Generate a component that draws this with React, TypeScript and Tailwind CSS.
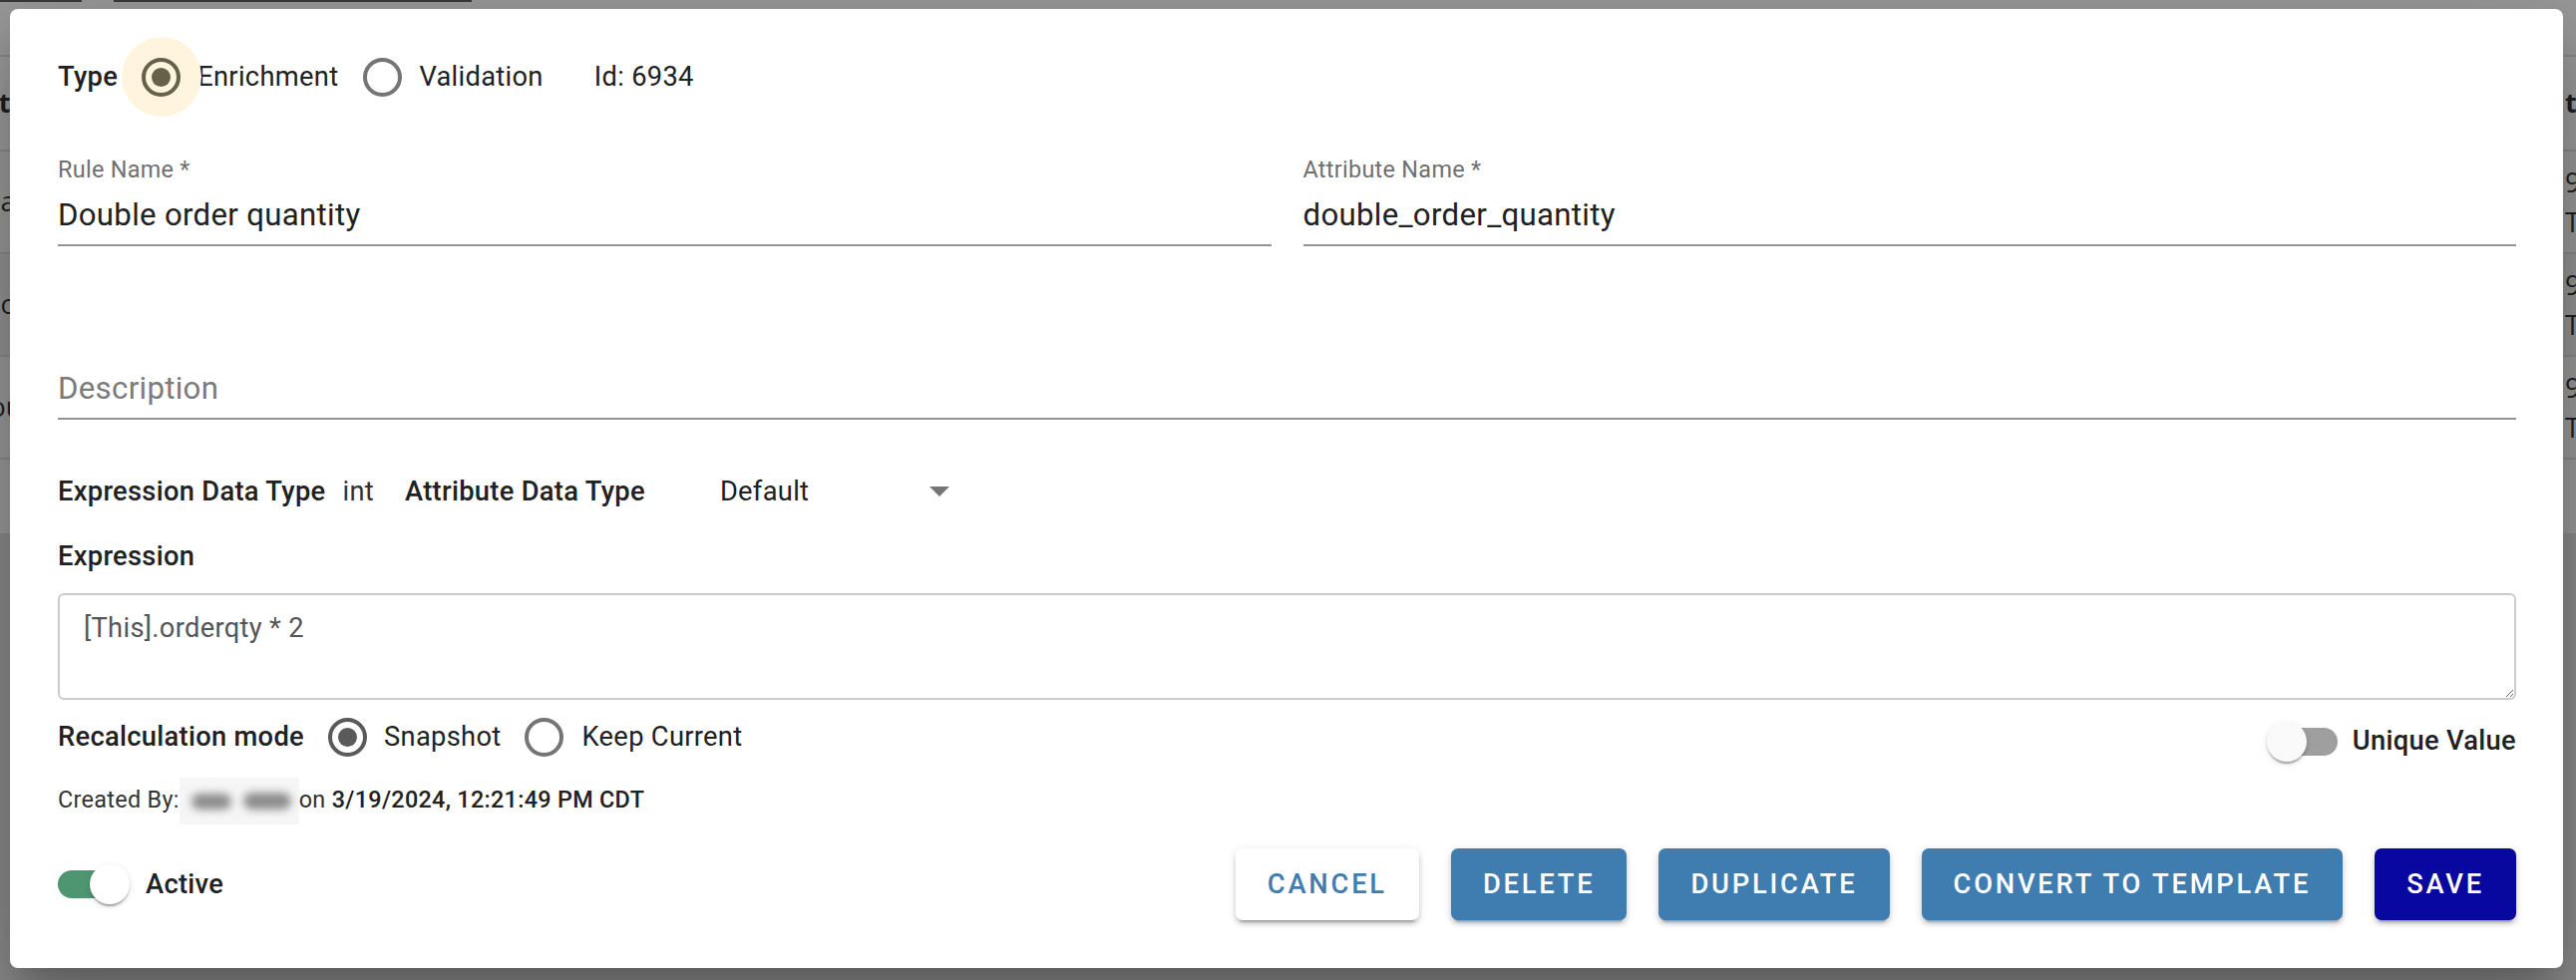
import React from "react";

function Radio({
  checked = false,
  focus = false,
  ring = "border-[#757575]",
  dot = "bg-[#757575]",
}: {
  checked?: boolean;
  focus?: boolean;
  ring?: string;
  dot?: string;
}) {
  return (
    <span className="relative flex h-[39px] w-[39px] shrink-0 items-center justify-center">
      {focus && (
        <span className="absolute left-1/2 top-1/2 h-[80px] w-[80px] -translate-x-1/2 -translate-y-1/2 rounded-full bg-[#fff5df]" />
      )}
      <span
        className={
          "relative flex h-[39px] w-[39px] items-center justify-center rounded-full border-[4px] " +
          ring
        }
      >
        {checked && <span className={"h-[19px] w-[19px] rounded-full " + dot} />}
      </span>
    </span>
  );
}

const thumbShadow =
  "shadow-[0_4px_2px_-2px_rgba(0,0,0,0.2),0_2px_2px_0_rgba(0,0,0,0.14),0_2px_6px_0_rgba(0,0,0,0.12)]";

function SwitchOn() {
  return (
    <span className="relative block h-[40px] w-[72px] shrink-0">
      <span className="absolute left-0 top-[6px] h-[28px] w-[66px] rounded-full bg-[#4e9571]" />
      <span className={"absolute left-[32px] top-0 h-[40px] w-[40px] rounded-full bg-white " + thumbShadow} />
    </span>
  );
}

function SwitchOff() {
  return (
    <span className="relative block h-[40px] w-[71px] shrink-0">
      <span className="absolute left-[5px] top-[6px] h-[28px] w-[66px] rounded-full bg-[#9f9f9f]" />
      <span className={"absolute left-0 top-0 h-[40px] w-[40px] rounded-full bg-[#fafafa] " + thumbShadow} />
    </span>
  );
}

const btnBase =
  "h-[72px] rounded-[7px] px-[32px] text-[27.3px] font-medium uppercase tracking-[2.8px] shadow-[0_6px_2px_-4px_rgba(0,0,0,0.2),0_4px_4px_0_rgba(0,0,0,0.14),0_2px_10px_0_rgba(0,0,0,0.12)]";

function Background() {
  const rows = [
    { l: "Daily", ml: "-ml-[19px]" },
    { l: "Dollar", ml: "-ml-[19px]" },
    { l: "Double", ml: "-ml-[30px]" },
  ];
  return (
    <div className="absolute inset-0 flex flex-col font-['Open_Sans',sans-serif] text-[27px] text-[#1f1f1f]">
      <div className="flex h-[2px] shrink-0 bg-[#9a9a9a]">
        <div className="w-[82px] bg-[#3a3a3a]" />
        <div className="w-[32px]" />
        <div className="w-[359px] bg-[#3a3a3a]" />
      </div>
      <div className="h-[53px] shrink-0 bg-[#9a9a9a]" />
      <div className="flex h-[95px] shrink-0 items-center justify-between border-t-2 border-[#8a8a8a] bg-[#9c9c9c] font-bold">
        <span className="flex w-[10px] overflow-hidden whitespace-nowrap">
          <span className="-ml-[20px]">Att</span>
        </span>
        <span className="w-[11px] overflow-hidden whitespace-nowrap">t</span>
      </div>
      {rows.map((r, i) => (
        <div
          key={i}
          className={
            "flex h-[103px] shrink-0 items-center justify-between border-t-2 border-[#8a8a8a] " +
            (i === 1 ? "bg-[#949494]" : "bg-[#9a9a9a]")
          }
        >
          <span className="flex w-[10px] overflow-hidden whitespace-nowrap">
            <span className={r.ml}>{r.l}</span>
          </span>
          <span className="flex w-[11px] flex-col overflow-hidden whitespace-nowrap leading-[40px]">
            <span>9</span>
            <span>T</span>
          </span>
        </div>
      ))}
      <div className="h-[78px] shrink-0 border-b-2 border-t-2 border-[#8a8a8a] bg-[#9a9a9a]" />
      <div className="flex-1 bg-[#8c8c8c]" />
    </div>
  );
}

export default function App() {
  return (
    <div className="relative h-[983px] w-[2583px] overflow-hidden bg-[#8c8c8c] font-['Roboto',sans-serif]">
      <Background />
      <div className="absolute left-[10px] top-[9px] flex h-[962px] w-[2560px] flex-col rounded-[8px] bg-white pl-[48px] pr-[47px] pt-[27px] tracking-[0.3px] text-[#212121] shadow-[0_21px_29px_-14px_rgba(0,0,0,0.2),0_47px_74px_6px_rgba(0,0,0,0.14),0_18px_90px_16px_rgba(0,0,0,0.12)]">
        {/* Type row */}
        <div className="flex h-[82px] items-center text-[27.3px]">
          <span className="font-medium">Type</span>
          <span className="ml-[24px]">
            <Radio checked focus ring="border-[#67604a]" dot="bg-[#67604a]" />
          </span>
          <span className="ml-[17px]">Enrichment</span>
          <span className="ml-[25px]">
            <Radio />
          </span>
          <span className="ml-[17px]">Validation</span>
          <span className="ml-[51px]">Id: 6934</span>
        </div>

        {/* Name fields */}
        <div className="mt-[35px] flex gap-[32px]">
          <div className="flex flex-1 flex-col">
            <label className="text-[23.4px] leading-[34px] text-[#707070]">Rule Name *</label>
            <div className="mt-[6px] border-b-2 border-[#949494] pb-[7px]">
              <input
                readOnly
                defaultValue="Double order quantity"
                className="block h-[45px] w-full bg-transparent text-[31.2px] leading-[45px] text-[#212121] outline-none"
              />
            </div>
          </div>
          <div className="flex flex-1 flex-col">
            <label className="text-[23.4px] leading-[34px] text-[#707070]">Attribute Name *</label>
            <div className="mt-[6px] border-b-2 border-[#949494] pb-[7px]">
              <input
                readOnly
                defaultValue="double_order_quantity"
                className="block h-[45px] w-full bg-transparent text-[31.2px] leading-[45px] text-[#212121] outline-none"
              />
            </div>
          </div>
        </div>

        {/* Description */}
        <div className="mt-[80px] border-b-2 border-[#949494] pb-[7px] pt-[40px]">
          <input
            readOnly
            placeholder="Description"
            className="block h-[45px] w-full bg-transparent text-[31.2px] leading-[45px] text-[#212121] outline-none placeholder:text-[#7b7b7b]"
          />
        </div>

        {/* Data types */}
        <div className="mt-[48px] flex h-[48px] items-center text-[27.3px]">
          <span className="font-medium">Expression Data Type</span>
          <span className="ml-[17px] text-[#333333]">int</span>
          <span className="ml-[31px] font-medium">Attribute Data Type</span>
          <span className="ml-[75px]">Default</span>
          <svg className="ml-[121px]" width="20" height="10" viewBox="0 0 20 10">
            <path d="M0 0 L20 0 L10 10 Z" fill="#757575" />
          </svg>
        </div>

        {/* Expression */}
        <div className="mt-[25px] text-[27.3px] font-medium leading-[32px]">Expression</div>
        <textarea
          readOnly
          defaultValue="[This].orderqty * 2"
          className="mt-[21px] block h-[107px] w-full rounded-[6px] border-2 border-[#cbcbcb] bg-white pl-[24px] pr-[24px] pt-[17px] text-[27.3px] leading-[32px] text-[#555555] outline-none"
        />

        {/* Recalculation */}
        <div className="mt-[13px] flex h-[48px] items-center justify-between text-[27.3px]">
          <div className="flex items-center">
            <span className="font-medium">Recalculation mode</span>
            <span className="ml-[24px]">
              <Radio checked ring="border-[#5a5a5a]" dot="bg-[#5a5a5a]" />
            </span>
            <span className="ml-[17px]">Snapshot</span>
            <span className="ml-[23px]">
              <Radio />
            </span>
            <span className="ml-[19px]">Keep Current</span>
          </div>
          <div className="mt-[9px] flex items-center">
            <SwitchOff />
            <span className="ml-[15px] font-medium">Unique Value</span>
          </div>
        </div>

        {/* Created by */}
        <div className="mt-[23px] flex h-[34px] items-center text-[23.4px] text-[#333333]">
          <span>Created By:</span>
          <span className="relative block h-[47px] w-[120px] shrink-0 bg-[#f6f6f6]">
            <span className="absolute left-[12px] top-[16px] h-[16px] w-[40px] rounded-full bg-[#8c8c8c] blur-[4px]" />
            <span className="absolute left-[64px] top-[15px] h-[17px] w-[48px] rounded-full bg-[#8c8c8c] blur-[4px]" />
          </span>
          <span>on&nbsp;</span>
          <span className="font-medium text-[#212121]">3/19/2024, 12:21:49 PM CDT</span>
        </div>

        {/* Bottom row */}
        <div className="mt-[31px] flex h-[72px] items-center justify-between">
          <div className="flex items-center">
            <SwitchOn />
            <span className="ml-[16px] text-[27.3px] font-medium">Active</span>
          </div>
          <div className="flex items-center gap-[32px]">
            <button className={btnBase + " bg-white text-[#3f7db0]"}>Cancel</button>
            <button className={btnBase + " bg-[#3f7db0] text-white"}>Delete</button>
            <button className={btnBase + " bg-[#3f7db0] text-white"}>Duplicate</button>
            <button className={btnBase + " bg-[#3f7db0] text-white"}>Convert to Template</button>
            <button className={btnBase + " bg-[#0807a0] text-white"}>Save</button>
          </div>
        </div>
      </div>
    </div>
  );
}
